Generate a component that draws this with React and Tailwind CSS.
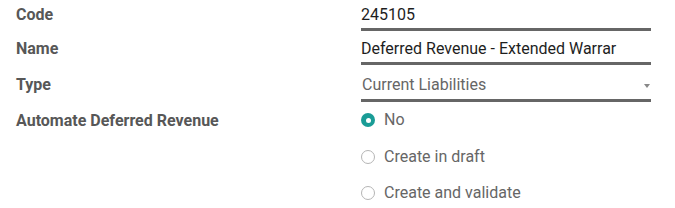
import React from "react";

function Label({ children, className = "" }) {
  return (
    <div className={`w-[345px] shrink-0 text-[16px] font-bold leading-[24px] text-[#575757] ${className}`}>{children}</div>
  );
}

function Radio({ checked, label }) {
  return (
    <div className="flex h-[36.5px] items-center">
      {checked ? (
        <span className="flex h-[14px] w-[14px] items-center justify-center rounded-full bg-[#1a9c96]">
          <span className="h-[5px] w-[5px] rounded-full bg-white" />
        </span>
      ) : (
        <span className="h-[14px] w-[14px] rounded-full border border-[#b5b5b5] bg-white" />
      )}
      <span className="ml-[9px] text-[16px] leading-[24px] text-[#666666]">{label}</span>
    </div>
  );
}

export default function App() {
  return (
    <div
      className="h-[208px] w-[675px] overflow-hidden bg-white pl-4 pt-[3px]"
      style={{ fontFamily: "Roboto, 'Noto Sans', sans-serif" }}
    >
      <div className="flex">
        <Label>Code</Label>
        <div className="h-[28px] w-[290px] border-b-[3px] border-[#666666] text-[16px] leading-[24px] text-[#1e1e1e]">245105</div>
      </div>
      <div className="mt-[6px] flex">
        <Label>Name</Label>
        <div className="h-[28px] w-[290px] overflow-hidden whitespace-nowrap border-b-[3px] border-[#666666] text-[16px] leading-[24px] text-[#1e1e1e]">
          Deferred Revenue - Extended Warrar
        </div>
      </div>
      <div className="mt-[6px] flex">
        <Label className="pt-[2px]">Type</Label>
        <div className="relative h-[31px] w-[290px] border-b-[3px] border-[#666666] pt-[2px] text-[16px] leading-[24px] text-[#666666]">
          <span className="ml-[1px]">Current Liabilities</span>
          <span className="absolute right-[1px] top-[13px] h-0 w-0 border-x-[3px] border-t-[4px] border-x-transparent border-t-[#888888]" />
        </div>
      </div>
      <div className="flex">
        <Label className="pt-[7px]">Automate Deferred Revenue</Label>
        <div className="flex flex-col">
          <Radio checked label="No" />
          <Radio label="Create in draft" />
          <Radio label="Create and validate" />
        </div>
      </div>
    </div>
  );
}
